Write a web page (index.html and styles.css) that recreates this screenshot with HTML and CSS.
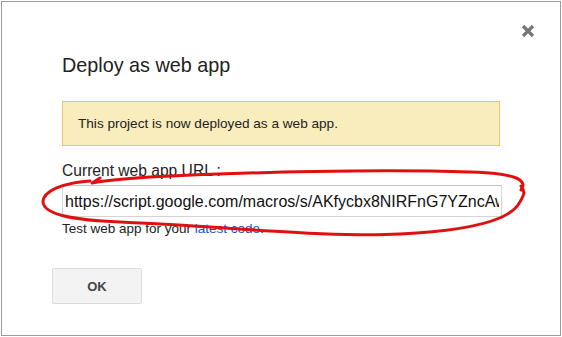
FILE: index.html
```html
<!DOCTYPE html>
<html lang="en">
<head>
    <meta charset="UTF-8">
    <title>Deploy as web app</title>
    <link rel="stylesheet" href="styles.css">
</head>
<body>
    <div class="dialog">
        <div class="dialog-top">
            <button class="close" aria-label="Close">
                <svg width="14" height="14" viewBox="0 0 14 14">
                    <path d="M2 2 L12 12 M12 2 L2 12" stroke="#777" stroke-width="3.2" stroke-linecap="butt"/>
                </svg>
            </button>
        </div>

        <h1>Deploy as web app</h1>

        <div class="notice">This project is now deployed as a web app.</div>

        <div class="label">Current web app URL :</div>
        <input class="url" type="text" readonly
               value="https://script.google.com/macros/s/AKfycbx8NIRFnG7YZncAw3Jd9qN1kLm">
        <div class="hint">Test web app for your <a href="#">latest code</a>.</div>

        <button class="ok">OK</button>
    </div>

    <!-- hand drawn red circle on top of the screenshot -->
    <svg class="scribble" width="562" height="337" viewBox="0 0 562 337">
        <path d="M521 190 C529 179, 512 173, 470 172 C380 169, 250 172, 150 177 C122 179, 102 181, 92 183 L100 178"
              fill="none" stroke="#e01010" stroke-width="3" stroke-linecap="round" stroke-linejoin="round"/>
        <path d="M90 181 C62 183, 43 191, 43 202 C44 214, 70 220, 120 222 C220 226, 330 238, 400 234 C462 231, 506 222, 518 205 C524 196, 526 191, 521 186"
              fill="none" stroke="#e01010" stroke-width="3" stroke-linecap="round"/>
    </svg>
</body>
</html>
```

FILE: styles.css
```css
body {
    margin: 0;
    background: #fff;
    font-family: "Liberation Sans", Arial, sans-serif;
    color: #222;
}

.dialog {
    box-sizing: border-box;
    width: 560px;
    height: 335px;
    margin: 1px 0 0 1px;
    border: 1px solid #9c9c9c;
    padding: 22px 25px 0 60px;
}

.dialog-top {
    display: flex;
    justify-content: flex-end;
}

.close {
    width: 14px;
    height: 14px;
    padding: 0;
    border: none;
    background: none;
    display: block;
}

.close svg {
    display: block;
}

h1 {
    margin: 15px 0 0;
    font-size: 19.8px;
    line-height: 24px;
    font-weight: normal;
    color: #222;
}

.notice {
    box-sizing: border-box;
    width: 438px;
    height: 45px;
    margin-top: 24px;
    padding: 13px 15px;
    background: #f9edbe;
    border: 1px solid #f0c36d;
    font-size: 13.6px;
    line-height: 17px;
}

.label {
    margin-top: 16px;
    font-size: 15.6px;
    line-height: 18px;
}

.url {
    display: block;
    box-sizing: border-box;
    width: 440px;
    height: 32px;
    margin-top: 5px;
    padding: 2px 2px 0;
    border: 1px solid #d4d4d4;
    border-top-color: #c4c4c4;
    font-family: inherit;
    font-size: 16px;
    color: #111;
    outline: none;
}

.hint {
    margin-top: 4px;
    font-size: 13.5px;
    line-height: 16px;
}

.hint a {
    color: #1155cc;
    text-decoration: none;
}

.ok {
    display: block;
    box-sizing: border-box;
    width: 90px;
    height: 36px;
    margin: 31px 0 0 -10px;
    background: #f3f3f3;
    border: 1px solid #dcdcdc;
    border-radius: 2px;
    font-family: inherit;
    font-size: 13px;
    font-weight: bold;
    color: #444;
}

.scribble {
    position: absolute;
    top: 0;
    left: 0;
    pointer-events: none;
}
```
